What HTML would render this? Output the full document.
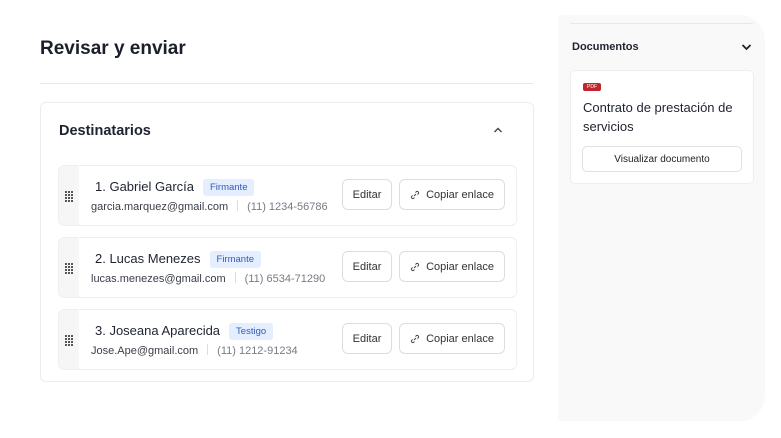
<!DOCTYPE html>
<html><head><meta charset="utf-8"><style>
*{box-sizing:border-box;margin:0;padding:0}
body{width:781px;height:438px;background:#fff;font-family:"Liberation Sans",sans-serif;color:#1f2330;position:relative;overflow:hidden}
.abs{position:absolute}
h1{position:absolute;left:40px;top:38px;font-size:19px;font-weight:bold;color:#1b1f2b}
.hr{position:absolute;left:40px;top:83px;width:493px;height:1px;background:#e6e7ea}
.card{position:absolute;left:40px;top:102px;width:494px;height:280px;border:1px solid #ebecef;border-radius:6px}
.ct{position:absolute;left:18px;top:20px;font-size:14.5px;font-weight:bold;color:#1f2330}
.row{position:absolute;left:17px;width:459px;height:61px;border:1px solid #eeeff1;border-radius:6px;background:#fff;overflow:hidden}
.grip{position:absolute;left:0;top:0;width:20px;height:100%;background:#f6f6f7}
.grip i{position:absolute;width:2px;height:2px;background:#555}
.name{position:absolute;left:36px;top:13px;font-size:13px;color:#1f2330}
.tag{display:inline-block;margin-left:9px;background:#e4eeff;color:#2f5bbd;font-size:9.5px;padding:3px 7px;border-radius:3px;vertical-align:1px}
.sub{position:absolute;left:32px;top:34px;font-size:11px;color:#3a3e48}
.sub span{color:#777b85}
.sub b{display:inline-block;width:1px;height:11px;background:#ddd;margin:0 9px;vertical-align:-1px}
.btn{position:absolute;top:13px;height:31px;border:1px solid #dcdde1;border-radius:6px;font-size:11px;color:#333;display:flex;align-items:center;justify-content:center;background:#fff}
.side{position:absolute;left:558px;top:15px;width:207px;height:406px;background:#f9f9f9;border-radius:0 25px 25px 0}
</style></head><body>
<h1>Revisar y enviar</h1>
<div class="hr"></div>
<div class="card">
<div class="ct">Destinatarios</div>
<svg class="abs" style="left:452px;top:23px" width="10" height="8" viewBox="0 0 10 8"><path d="M1.5 6 L5 2.5 L8.5 6" fill="none" stroke="#444" stroke-width="1.4"/></svg>
</div>
<!-- rows -->
<div class="row" style="left:58px;top:165px">
<div class="grip"><i style="left:6px;top:25px"></i><i style="left:9px;top:25px"></i><i style="left:12px;top:25px"></i><i style="left:6px;top:28px"></i><i style="left:9px;top:28px"></i><i style="left:12px;top:28px"></i><i style="left:6px;top:31px"></i><i style="left:9px;top:31px"></i><i style="left:12px;top:31px"></i><i style="left:6px;top:34px"></i><i style="left:9px;top:34px"></i><i style="left:12px;top:34px"></i></div>
<div class="name">1. Gabriel García<span class="tag">Firmante</span></div>
<div class="sub">garcia.marquez@gmail.com<b></b><span>(11) 1234-56786</span></div>
<div class="btn" style="left:283px;width:50px">Editar</div>
<div class="btn" style="left:340px;width:106px"><svg width="10" height="10" viewBox="0 0 10 10" style="margin-right:6px"><path d="M4 6 L6 4 M5.5 2.5 L6.5 1.5 a1.5 1.5 0 0 1 2 2 L7.5 4.5 M4.5 7.5 L3.5 8.5 a1.5 1.5 0 0 1 -2 -2 L2.5 5.5" fill="none" stroke="#444" stroke-width="1"/></svg>Copiar enlace</div>
</div>
<div class="row" style="left:58px;top:237px">
<div class="grip"><i style="left:6px;top:25px"></i><i style="left:9px;top:25px"></i><i style="left:12px;top:25px"></i><i style="left:6px;top:28px"></i><i style="left:9px;top:28px"></i><i style="left:12px;top:28px"></i><i style="left:6px;top:31px"></i><i style="left:9px;top:31px"></i><i style="left:12px;top:31px"></i><i style="left:6px;top:34px"></i><i style="left:9px;top:34px"></i><i style="left:12px;top:34px"></i></div>
<div class="name">2. Lucas Menezes<span class="tag">Firmante</span></div>
<div class="sub">lucas.menezes@gmail.com<b></b><span>(11) 6534-71290</span></div>
<div class="btn" style="left:283px;width:50px">Editar</div>
<div class="btn" style="left:340px;width:106px"><svg width="10" height="10" viewBox="0 0 10 10" style="margin-right:6px"><path d="M4 6 L6 4 M5.5 2.5 L6.5 1.5 a1.5 1.5 0 0 1 2 2 L7.5 4.5 M4.5 7.5 L3.5 8.5 a1.5 1.5 0 0 1 -2 -2 L2.5 5.5" fill="none" stroke="#444" stroke-width="1"/></svg>Copiar enlace</div>
</div>
<div class="row" style="left:58px;top:309px">
<div class="grip"><i style="left:6px;top:25px"></i><i style="left:9px;top:25px"></i><i style="left:12px;top:25px"></i><i style="left:6px;top:28px"></i><i style="left:9px;top:28px"></i><i style="left:12px;top:28px"></i><i style="left:6px;top:31px"></i><i style="left:9px;top:31px"></i><i style="left:12px;top:31px"></i><i style="left:6px;top:34px"></i><i style="left:9px;top:34px"></i><i style="left:12px;top:34px"></i></div>
<div class="name">3. Joseana Aparecida<span class="tag">Testigo</span></div>
<div class="sub">Jose.Ape@gmail.com<b></b><span>(11) 1212-91234</span></div>
<div class="btn" style="left:283px;width:50px">Editar</div>
<div class="btn" style="left:340px;width:106px"><svg width="10" height="10" viewBox="0 0 10 10" style="margin-right:6px"><path d="M4 6 L6 4 M5.5 2.5 L6.5 1.5 a1.5 1.5 0 0 1 2 2 L7.5 4.5 M4.5 7.5 L3.5 8.5 a1.5 1.5 0 0 1 -2 -2 L2.5 5.5" fill="none" stroke="#444" stroke-width="1"/></svg>Copiar enlace</div>
</div>
<!-- sidebar -->
<div class="side"></div>
<div class="abs" style="left:570px;top:23px;width:183px;height:1px;background:#e8e8ea"></div>
<div class="abs" style="left:572px;top:41px;font-size:11px;font-weight:bold;color:#1f2330">Documentos</div>
<svg class="abs" style="left:741px;top:43px" width="11" height="8" viewBox="0 0 11 8"><path d="M1.5 2 L5.5 6 L9.5 2" fill="none" stroke="#1f2330" stroke-width="1.8"/></svg>
<div class="abs" style="left:570px;top:70px;width:184px;height:114px;background:#fff;border:1px solid #eceef0;border-radius:5px"></div>
<div class="abs" style="left:583px;top:83px;width:18px;height:8px;background:#c0262c;border-radius:2px;color:#fff;font-size:5px;line-height:8px;text-align:center">PDF</div>
<div class="abs" style="left:583px;top:98px;width:165px;font-size:13px;line-height:19px;color:#1f2330">Contrato de prestación de servicios</div>
<div class="abs" style="left:582px;top:146px;width:160px;height:26px;border:1px solid #e0e1e4;border-radius:5px;font-size:10px;color:#222;display:flex;align-items:center;justify-content:center">Visualizar documento</div>
</body></html>
